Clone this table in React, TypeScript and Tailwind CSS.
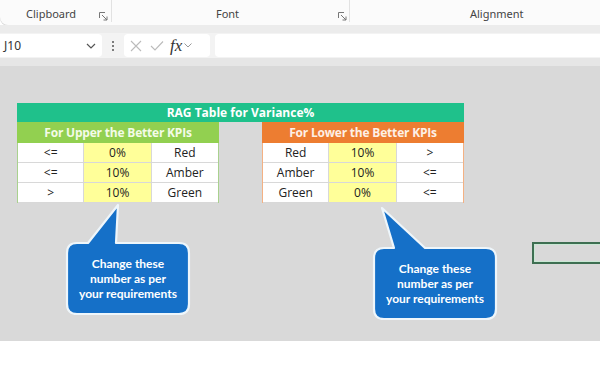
import React from "react";

function Row({ a, b, c }: { a: string; b: string; c: string }) {
  return (
    <div className="flex h-[20px] text-[12px] text-[#222]">
      <div className="flex w-[67px] items-center justify-center border-b border-r border-[#d8d8d8] bg-white">{a}</div>
      <div className="flex w-[68px] items-center justify-center border-b border-r border-[#d8d8d8] bg-[#ffff99]">{b}</div>
      <div className="flex w-[67px] items-center justify-center border-b border-[#d8d8d8] bg-white">{c}</div>
    </div>
  );
}

function Callout({ left, top, tip, baseL, baseR }: { left: number; top: number; tip: [number, number]; baseL: number; baseR: number }) {
  const w = 122;
  const h = 71;
  const ox = left;
  const oy = tip[1];
  const bt = top - oy;
  const tx = tip[0] - ox;
  const d = `M 10 ${bt} L ${baseL - ox} ${bt} L ${tx} 0 L ${baseR - ox} ${bt} L ${w - 10} ${bt} Q ${w} ${bt} ${w} ${bt + 10} L ${w} ${bt + h - 10} Q ${w} ${bt + h} ${w - 10} ${bt + h} L 10 ${bt + h} Q 0 ${bt + h} 0 ${bt + h - 10} L 0 ${bt + 10} Q 0 ${bt} 10 ${bt} Z`;
  return (
    <div className="absolute" style={{ left: ox - 2, top: oy - 2, width: w + 4, height: bt + h + 4 }}>
      <svg width={w + 4} height={bt + h + 4} className="absolute left-0 top-0">
        <g transform="translate(2,2)">
          <path d={d} fill="#1570c8" stroke="#eef6fb" strokeWidth="2.2" strokeLinejoin="round" />
        </g>
      </svg>
      <div
        className="absolute left-[2px] flex w-[122px] flex-col items-center justify-center text-center text-[12px] font-bold leading-[15px] text-white [font-family:Lato,sans-serif]"
        style={{ top: bt + 2, height: h }}
      >
        <span>Change these</span>
        <span>number as per</span>
        <span>your requirements</span>
      </div>
    </div>
  );
}

function Launcher({ left }: { left: number }) {
  return (
    <svg className="absolute top-[12px]" style={{ left }} width="9" height="9" viewBox="0 0 9 9">
      <path d="M0.5 6 V0.5 H6" fill="none" stroke="#777" strokeWidth="1" />
      <path d="M3 3 L8 8 M8 4.5 V8 H4.5" fill="none" stroke="#777" strokeWidth="1" />
    </svg>
  );
}

export default function App() {
  return (
    <div className="relative h-[380px] w-[600px] overflow-hidden bg-white [font-family:'Noto_Sans',sans-serif]">
      {/* Ribbon bottom */}
      <div className="flex h-[25px] items-end rounded-bl-[8px] bg-[#fbfbfb] pb-[3px] text-[11px] text-[#444] shadow-[0_1px_0_#d6d6d6]">
        <div className="relative flex h-full w-[112px] items-end border-r border-[#e2e2e2]">
          <span className="ml-[26px]">Clipboard</span>
          <Launcher left={99} />
        </div>
        <div className="relative flex h-full w-[238px] items-end justify-center border-r border-[#e2e2e2]">
          <span className="-ml-[6px]">Font</span>
          <Launcher left={226} />
        </div>
        <div className="flex h-full flex-1 items-end">
          <span className="ml-[120px]">Alignment</span>
        </div>
      </div>
      <div className="h-[8px] bg-[#ececec]" />
      {/* formula bar */}
      <div className="flex h-[25px] items-center gap-[5px] bg-[#f3f3f3] text-[12px] text-[#333]">
        <div className="flex h-[23px] w-[102px] items-center justify-between rounded-r-[4px] bg-white pl-[4px] pr-[6px]">
          <span>J10</span>
          <svg width="10" height="6" viewBox="0 0 10 6">
            <path d="M1 1 L5 5 L9 1" fill="none" stroke="#555" strokeWidth="1.2" />
          </svg>
        </div>
        <div className="flex w-[12px] flex-col items-center gap-[2px]">
          <span className="h-[2px] w-[2px] rounded-full bg-[#555]" />
          <span className="h-[2px] w-[2px] rounded-full bg-[#555]" />
          <span className="h-[2px] w-[2px] rounded-full bg-[#555]" />
        </div>
        <div className="flex h-[23px] w-[86px] items-center gap-[8px] rounded-[4px] bg-white px-[6px]">
          <svg width="12" height="12" viewBox="0 0 12 12">
            <path d="M1 1 L11 11 M11 1 L1 11" stroke="#bbb" strokeWidth="1.1" />
          </svg>
          <svg width="14" height="12" viewBox="0 0 14 12">
            <path d="M1 6 L5 10 L13 1.5" fill="none" stroke="#bbb" strokeWidth="1.1" />
          </svg>
          <span className="-ml-[2px] text-[17px] italic leading-none text-[#333] [font-family:'Liberation_Serif',serif]">fx</span>
          <svg className="-ml-[6px]" width="8" height="5" viewBox="0 0 8 5">
            <path d="M0.5 0.5 L4 4 L7.5 0.5" fill="none" stroke="#999" strokeWidth="1" />
          </svg>
        </div>
        <div className="h-[23px] flex-1 rounded-l-[4px] bg-white" />
      </div>
      <div className="h-[8px] bg-[#e6e6e6]" />
      {/* Sheet */}
      <div className="relative h-[275px] bg-[#d9d9d9] pl-[17px] pt-[37px]">
        <div className="w-[447px] [font-family:'Open_Sans',sans-serif]">
          <div className="flex h-[19px] items-center justify-center bg-[#1fc18b] text-[12px] font-bold text-white">
            RAG Table for Variance%
          </div>
          <div className="flex justify-between">
            <div className="w-[202px]">
              <div className="flex h-[21px] items-center justify-center bg-[#92d050] text-[12px] font-bold tracking-[-0.2px] text-[#f4fbe8]">
                For Upper the Better KPIs
              </div>
              <div className="border-x border-[#a9d18e]">
                <Row a="<=" b="0%" c="Red" />
                <Row a="<=" b="10%" c="Amber" />
                <Row a=">" b="10%" c="Green" />
              </div>
            </div>
            <div className="w-[202px]">
              <div className="flex h-[21px] items-center justify-center bg-[#ed7d31] text-[12px] font-bold tracking-[-0.2px] text-[#fdf0e6]">
                For Lower the Better KPIs
              </div>
              <div className="border-x border-[#f4b183]">
                <Row a="Red" b="10%" c=">" />
                <Row a="Amber" b="10%" c="<=" />
                <Row a="Green" b="0%" c="<=" />
              </div>
            </div>
          </div>
        </div>
        <div className="absolute left-[532px] top-[176px] h-[22px] w-[80px] border-2 border-[#3e6f52] shadow-[inset_0_0_0_1px_#c9e8d4]" />
      </div>
      <Callout left={67} top={243} tip={[118, 205]} baseL={88} baseR={116} />
      <Callout left={374} top={248} tip={[382, 208]} baseL={394} baseR={425} />
    </div>
  );
}
